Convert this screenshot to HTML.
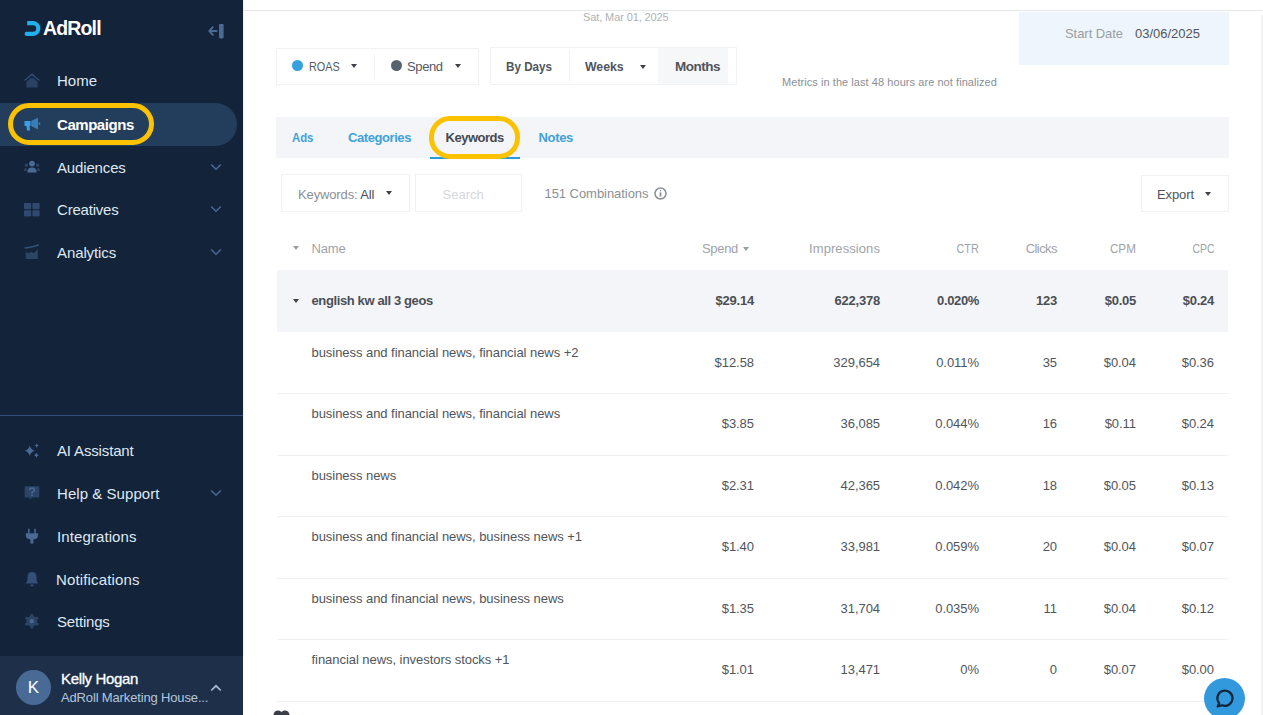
<!DOCTYPE html>
<html><head><meta charset="utf-8">
<style>
*{box-sizing:border-box;margin:0;padding:0}
html,body{width:1263px;height:715px;overflow:hidden;background:#fff;font-family:"Liberation Sans",sans-serif;position:relative}
.abs{position:absolute}
#side{position:absolute;left:0;top:0;width:243px;height:715px;background:#132339}
.nav{position:absolute;left:57px;color:#dfe8f3;font-size:15px;line-height:18px;white-space:nowrap}
.ico{position:absolute;left:24px}
.chev{position:absolute;left:210px;width:12px;height:8px}
#main{position:absolute;left:243px;top:0;width:1020px;height:715px;background:#fff}
.t{position:absolute;white-space:nowrap;line-height:1}
.tri{position:absolute;width:0;height:0;border-left:3.5px solid transparent;border-right:3.5px solid transparent;border-top:4px solid #3c4147}
.tab{font-size:13px;font-weight:bold;color:#40a2d8}
.th{top:242.2px;font-size:13px;color:#9fa3a8}
.gb{font-size:13px;font-weight:bold;color:#4a4f55;letter-spacing:-0.25px}
.td{font-size:13px;color:#50555b;letter-spacing:-0.05px}
</style></head><body>
<div id="side">
  <!-- logo -->
  <svg class="abs" style="left:24px;top:21px" width="17" height="15" viewBox="0 0 17 15">
    <path d="M3.2 2.2 H9 A5.3 5.3 0 0 1 9 12.8 H2.6" fill="none" stroke="#21b0ee" stroke-width="4.2"/><circle cx="2.7" cy="12.8" r="2.1" fill="#21b0ee"/>
  </svg>
  <div class="t" style="left:43px;top:19px;color:#fff;font-size:19.5px;font-weight:bold;letter-spacing:-0.85px">AdRoll</div>
  <!-- collapse -->
  <svg class="abs" style="left:207px;top:23px" width="18" height="16" viewBox="0 0 18 16">
    <path d="M5.8 4.2 L2.3 8 L5.8 11.8 M2.6 8 H9.6" fill="none" stroke="#4a6a96" stroke-width="1.9" stroke-linecap="round" stroke-linejoin="round"/>
    <rect x="12" y="1" width="4.6" height="14.4" rx="0.8" fill="#4a6a96"/>
  </svg>

  <div class="abs" style="left:0;top:103px;width:237px;height:43px;background:#233d5c;border-radius:0 22px 22px 0"></div>

  <!-- home icon -->
  <svg class="ico" style="top:73px" width="17" height="16" viewBox="0 0 17 16">
    <path d="M0.6 7.4 L8 1.2 L15.4 7.4" fill="none" stroke="#31507a" stroke-width="1.3"/>
    <path d="M2.4 8.6 L8 4.2 L13.6 8.6 V14.4 H2.4 Z" fill="#2a4262"/>
  </svg>
  <!-- megaphone -->
  <svg class="ico" style="top:117px" width="17" height="15" viewBox="0 0 17 15">
    <path d="M0.5 4 H6.5 V9 H0.5 Z" fill="#3a9fe6"/>
    <path d="M2.5 9 H5.5 L6 13.5 H3 Z" fill="#3a9fe6"/>
    <path d="M7.2 4 L14 0.8 V12.6 L7.2 9 Z" fill="#3a7db5"/>
    <rect x="14.5" y="5.4" width="1.8" height="2.4" fill="#3a7db5"/>
  </svg>
  <!-- audiences -->
  <svg class="ico" style="top:159px" width="17" height="15" viewBox="0 0 17 15">
    <circle cx="8" cy="4.6" r="2.9" fill="#4a6a96"/>
    <path d="M3.4 13.5 C3.4 9.4 5.2 8.4 8 8.4 C10.8 8.4 12.6 9.4 12.6 13.5 Z" fill="#4a6a96"/>
    <circle cx="2.4" cy="6.2" r="1.6" fill="#2c4565"/>
    <circle cx="13.6" cy="6.2" r="1.6" fill="#2c4565"/>
    <path d="M0 12 C0 9.6 1 9 2.6 9 L2.8 12 Z M16 12 C16 9.6 15 9 13.4 9 L13.2 12 Z" fill="#2c4565"/>
  </svg>
  <!-- creatives -->
  <svg class="ico" style="top:203px" width="16" height="14" viewBox="0 0 16 14">
    <rect x="0" y="0" width="7.2" height="6.3" rx="0.8" fill="#30496e"/>
    <rect x="8.4" y="0" width="7.2" height="6.3" rx="0.8" fill="#30496e"/>
    <rect x="0" y="7.3" width="7.2" height="6.3" rx="0.8" fill="#30496e"/>
    <rect x="8.4" y="7.3" width="7.2" height="6.3" rx="0.8" fill="#30496e"/>
  </svg>
  <!-- analytics -->
  <svg class="ico" style="top:244px" width="16" height="16" viewBox="0 0 16 16">
    <path d="M0.5 4 C5 3.6 10 3 14.8 0.8" fill="none" stroke="#34507a" stroke-width="1.5"/>
    <path d="M1.8 15 V7.5 L4.5 9.5 L7 7.8 L9.8 9.2 L13.8 5.2 V15 Z" fill="#2c4565"/>
  </svg>
  <!-- chevrons -->
  <svg class="chev" style="top:163px" viewBox="0 0 12 8"><path d="M1.2 1.5 L6 6.2 L10.8 1.5" fill="none" stroke="#4a6a96" stroke-width="1.5"/></svg>
  <svg class="chev" style="top:205px" viewBox="0 0 12 8"><path d="M1.2 1.5 L6 6.2 L10.8 1.5" fill="none" stroke="#4a6a96" stroke-width="1.5"/></svg>
  <svg class="chev" style="top:248px" viewBox="0 0 12 8"><path d="M1.2 1.5 L6 6.2 L10.8 1.5" fill="none" stroke="#4a6a96" stroke-width="1.5"/></svg>

  <div class="nav" style="top:71.8px">Home</div>
  <div class="nav" style="top:115.5px;font-weight:bold;color:#fff;letter-spacing:-0.45px">Campaigns</div>
  <div class="nav" style="top:158.5px;letter-spacing:-0.15px">Audiences</div>
  <div class="nav" style="top:200.5px;letter-spacing:-0.2px">Creatives</div>
  <div class="nav" style="top:243.5px;letter-spacing:-0.1px">Analytics</div>

  <div class="abs" style="left:0;top:415px;width:243px;height:1px;background:#34507a"></div>

  <!-- AI sparkle -->
  <svg class="ico" style="top:442px" width="16" height="16" viewBox="0 0 16 16">
    <path d="M5.8 3.5 Q6.6 7.4 10.8 8.7 Q6.6 10 5.8 14 Q5 10 0.8 8.7 Q5 7.4 5.8 3.5 Z" fill="#4a6a96"/>
    <path d="M12.7 1.2 Q13 2.9 14.8 3.5 Q13 4.1 12.7 5.8 Q12.4 4.1 10.6 3.5 Q12.4 2.9 12.7 1.2 Z" fill="#4a6a96"/>
    <path d="M12.4 10.4 Q12.8 12.5 14.8 13.2 Q12.8 13.9 12.4 16 Q12 13.9 10 13.2 Q12 12.5 12.4 10.4 Z" fill="#4a6a96"/>
  </svg>
  <!-- help -->
  <svg class="ico" style="top:485px" width="16" height="16" viewBox="0 0 16 16">
    <path d="M1.3 1.2 H14.7 Q15.3 1.2 15.3 1.8 V12 Q15.3 12.6 14.7 12.6 H8 L5.8 15.2 L5.6 12.6 H1.3 Q0.7 12.6 0.7 12 V1.8 Q0.7 1.2 1.3 1.2 Z" fill="#2c4565"/>
    <path d="M5.6 5 Q5.8 2.9 8 2.9 Q10.3 2.9 10.3 4.9 Q10.3 6.2 8.8 6.9 Q8 7.3 8 8.4" fill="none" stroke="#4a6a96" stroke-width="1.5"/>
    <rect x="7.2" y="9.5" width="1.6" height="1.6" fill="#4a6a96"/>
  </svg>
  <!-- plug -->
  <svg class="ico" style="top:528px" width="16" height="17" viewBox="0 0 16 17">
    <rect x="4" y="0.8" width="1.6" height="4.5" fill="#4a6a96"/>
    <rect x="10.2" y="0.8" width="1.6" height="4.5" fill="#4a6a96"/>
    <path d="M1.8 5.2 H14 V7.6 Q14 11 9.4 11.6 V15.6 H6.4 V11.6 Q1.8 11 1.8 7.6 Z" fill="#4a6a96"/>
  </svg>
  <!-- bell -->
  <svg class="ico" style="top:571px" width="16" height="16" viewBox="0 0 16 16">
    <path d="M8 0.8 Q12.4 1 12.6 6.5 V9.8 L14.3 12.6 H1.7 L3.4 9.8 V6.5 Q3.6 1 8 0.8 Z" fill="#34507a"/>
    <rect x="6.3" y="13.6" width="3.4" height="1.6" rx="0.8" fill="#34507a"/>
  </svg>
  <!-- gear -->
  <svg class="ico" style="top:613px" width="16" height="16" viewBox="0 0 16 16">
    <g fill="#2c4565">
      <circle cx="7.8" cy="8.2" r="5.4"/>
      <rect x="6.4" y="0.9" width="2.8" height="14.6" rx="0.6"/>
      <rect x="6.4" y="0.9" width="2.8" height="14.6" rx="0.6" transform="rotate(60 7.8 8.2)"/>
      <rect x="6.4" y="0.9" width="2.8" height="14.6" rx="0.6" transform="rotate(120 7.8 8.2)"/>
    </g>
    <circle cx="7.8" cy="8.2" r="2.1" fill="#4a6a96"/>
  </svg>
  <svg class="chev" style="top:488.5px" viewBox="0 0 12 8"><path d="M1.2 1.5 L6 6.2 L10.8 1.5" fill="none" stroke="#4a6a96" stroke-width="1.5"/></svg>

  <div class="nav" style="top:441.5px;letter-spacing:-0.15px">AI Assistant</div>
  <div class="nav" style="top:484.5px;letter-spacing:0.05px">Help &amp; Support</div>
  <div class="nav" style="top:527.5px;letter-spacing:0.1px">Integrations</div>
  <div class="nav" style="top:570.5px;left:56px;letter-spacing:0.15px">Notifications</div>
  <div class="nav" style="top:612.5px;letter-spacing:-0.2px">Settings</div>

  <div class="abs" style="left:0;top:656px;width:243px;height:59px;background:#1e3049"></div>
  <div class="abs" style="left:16px;top:670px;width:35px;height:35px;border-radius:50%;background:#4a6a96;color:#fff;font-size:17px;line-height:35px;text-align:center">K</div>
  <div class="t" style="left:61px;top:671px;color:#fff;font-size:15px;letter-spacing:-0.35px;-webkit-text-stroke:0.3px #fff">Kelly Hogan</div>
  <div class="t" style="left:61px;top:690.7px;color:#b4c6de;font-size:13px;letter-spacing:-0.15px">AdRoll Marketing House...</div>
  <svg class="chev" style="top:684px" viewBox="0 0 12 8"><path d="M1.2 6.5 L6 1.8 L10.8 6.5" fill="none" stroke="#a8bcd8" stroke-width="1.7"/></svg>
  <!-- yellow highlight -->
  <div class="abs" style="left:7.5px;top:103px;width:146px;height:41.5px;border:5px solid #fcc200;border-radius:21px"></div>
</div>


<div id="main"></div>
<!-- top line -->
<div class="abs" style="left:243px;top:0;width:1px;height:656px;background:#e9eff6"></div>
<div class="abs" style="left:243px;top:10px;width:1020px;height:1px;background:#e4e6e8"></div>
<div class="abs" style="left:1261px;top:15px;width:2px;height:700px;background:#f0f1f3"></div>
<div class="t" style="letter-spacing:-0.11px;left:583px;top:11.6px;font-size:11px;color:#aeb2b6">Sat, Mar 01, 2025</div>

<!-- ROAS/Spend group -->
<div class="abs" style="left:276px;top:48px;width:203px;height:37px;border:1px solid #f0f1f3;background:#fff"></div>
<div class="abs" style="left:374px;top:54px;width:1px;height:25px;background:#f0f1f3"></div>
<div class="abs" style="left:292px;top:60px;width:11px;height:11px;border-radius:50%;background:#35a0dd"></div>
<div class="t" style="transform:scaleX(0.836);transform-origin:left;left:309px;top:60px;font-size:13px;color:#555a60">ROAS</div>
<div class="tri" style="left:351px;top:64px"></div>
<div class="abs" style="left:391px;top:60px;width:11px;height:11px;border-radius:50%;background:#56636d"></div>
<div class="t" style="letter-spacing:-0.38px;left:407px;top:60px;font-size:13px;color:#555a60">Spend</div>
<div class="tri" style="left:455px;top:64px"></div>

<!-- By days group -->
<div class="abs" style="left:490px;top:47px;width:247px;height:38px;border:1px solid #f1f2f4;background:#fff"></div>
<div class="abs" style="left:658px;top:48px;width:70px;height:36px;background:#f6f7f9"></div>
<div class="abs" style="left:569px;top:50px;width:1px;height:32px;background:#f0f1f3"></div>
<div class="t" style="transform:scaleX(0.863);transform-origin:left;left:506px;top:59.5px;font-size:13.5px;font-weight:bold;color:#50555b">By Days</div>
<div class="t" style="transform:scaleX(0.910);transform-origin:left;left:585px;top:59.5px;font-size:13.5px;font-weight:bold;color:#50555b">Weeks</div>
<div class="tri" style="left:640px;top:65px"></div>
<div class="t" style="letter-spacing:-0.50px;left:675px;top:59.5px;font-size:13.5px;font-weight:bold;color:#50555b">Months</div>

<div class="t" style="letter-spacing:0.06px;left:782px;top:76.6px;font-size:11px;color:#8a8f95">Metrics in the last 48 hours are not finalized</div>

<!-- start date -->
<div class="abs" style="left:1019px;top:12px;width:210px;height:53px;background:#eef5fc"></div>
<div class="t" style="letter-spacing:-0.05px;left:1065px;top:27.2px;font-size:13px;color:#9a9ea3">Start Date</div>
<div class="t" style="letter-spacing:-0.01px;left:1135px;top:27.2px;font-size:13px;color:#50555b">03/06/2025</div>

<!-- tabs -->
<div class="abs" style="left:276px;top:117px;width:953px;height:41px;background:#f4f5f8"></div>
<div class="t tab" style="transform:scaleX(0.871);transform-origin:left;left:292px;top:131px">Ads</div>
<div class="t tab" style="letter-spacing:-0.42px;left:348px;top:131px">Categories</div>
<div class="t tab" style="letter-spacing:-0.48px;left:445.5px;top:131px;color:#454a50">Keywords</div>
<div class="t tab" style="letter-spacing:-0.33px;left:538.5px;top:131px">Notes</div>
<div class="abs" style="left:430px;top:157px;width:90px;height:2px;background:#2b9ad8"></div>
<div class="abs" style="left:429px;top:116px;width:90.5px;height:42.5px;border:5px solid #fcc200;border-radius:21px"></div>

<!-- filter row -->
<div class="abs" style="left:281px;top:174px;width:129px;height:38px;border:1px solid #f0f1f3;background:#fff"></div>
<div class="t" style="letter-spacing:-0.13px;left:298px;top:187.5px;font-size:13px;color:#8a8f95">Keywords: <span style="color:#4a4f55">All</span></div>
<div class="tri" style="left:386px;top:191px"></div>
<div class="abs" style="left:415px;top:174px;width:107px;height:38px;border:1px solid #f0f1f3;background:#fff"></div>
<div class="t" style="left:442.5px;top:187.5px;font-size:13px;color:#d5d7da">Search</div>
<div class="t" style="letter-spacing:-0.05px;left:544.5px;top:187px;font-size:13px;color:#8a8f95">151 Combinations</div>
<svg class="abs" style="left:654px;top:187px" width="13" height="13" viewBox="0 0 13 13"><circle cx="6.5" cy="6.5" r="5.5" fill="none" stroke="#8a8f95" stroke-width="1.5"/><rect x="5.6" y="5.4" width="1.8" height="4.2" fill="#8a8f95"/><circle cx="6.5" cy="3.8" r="0.8" fill="#8a8f95"/></svg>
<div class="abs" style="left:1141px;top:175px;width:88px;height:37px;border:1px solid #f0f1f3;background:#fff"></div>
<div class="t" style="letter-spacing:-0.10px;left:1157px;top:188px;font-size:13px;color:#50555b">Export</div>
<div class="tri" style="left:1205px;top:192px"></div>

<!-- table header -->
<div class="tri" style="left:293px;top:246px;border-top-color:#9a9ea3"></div>
<div class="t th" style="letter-spacing:-0.17px;left:311.5px">Name</div>
<div class="t th" style="letter-spacing:-0.32px;right:525px">Spend</div>
<div class="tri" style="left:743px;top:246.5px;border-top-color:#9a9ea3"></div>
<div class="t th" style="letter-spacing:0.08px;right:383px">Impressions</div>
<div class="t th" style="transform:scaleX(0.835);transform-origin:right;right:284px">CTR</div>
<div class="t th" style="letter-spacing:-0.55px;right:206px">Clicks</div>
<div class="t th" style="transform:scaleX(0.900);transform-origin:right;right:127px">CPM</div>
<div class="t th" style="transform:scaleX(0.801);transform-origin:right;right:49px">CPC</div>
<div class="abs" style="left:277px;top:269.5px;width:951px;height:62.5px;background:#f4f5f8"></div>
<div class="tri" style="left:293px;top:299px;border-top-color:#3c4147"></div>
<div class="t gb" style="letter-spacing:-0.38px;left:311.5px;top:293.7px">english kw all 3 geos</div>
<div class="t gb" style="letter-spacing:-0.21px;right:509px;top:293.7px">$29.14</div>
<div class="t gb" style="letter-spacing:-0.20px;right:383px;top:293.7px">622,378</div>
<div class="t gb" style="letter-spacing:-0.35px;right:284px;top:293.7px">0.020%</div>
<div class="t gb" style="right:206px;top:293.7px">123</div>
<div class="t gb" style="right:127px;top:293.7px">$0.05</div>
<div class="t gb" style="right:49px;top:293.7px">$0.24</div>
<div class="abs" style="left:277px;top:393px;width:951px;height:1px;background:#eff0f2"></div>
<div class="t td" style="left:311.5px;top:345.8px">business and financial news, financial news +2</div>
<div class="t td" style="right:509px;top:355.8px">$12.58</div>
<div class="t td" style="right:383px;top:355.8px">329,654</div>
<div class="t td" style="right:284px;top:355.8px">0.011%</div>
<div class="t td" style="right:206px;top:355.8px">35</div>
<div class="t td" style="right:127px;top:355.8px">$0.04</div>
<div class="t td" style="right:49px;top:355.8px">$0.36</div>
<div class="abs" style="left:277px;top:455px;width:951px;height:1px;background:#eff0f2"></div>
<div class="t td" style="left:311.5px;top:406.8px">business and financial news, financial news</div>
<div class="t td" style="right:509px;top:416.8px">$3.85</div>
<div class="t td" style="right:383px;top:416.8px">36,085</div>
<div class="t td" style="right:284px;top:416.8px">0.044%</div>
<div class="t td" style="right:206px;top:416.8px">16</div>
<div class="t td" style="right:127px;top:416.8px">$0.11</div>
<div class="t td" style="right:49px;top:416.8px">$0.24</div>
<div class="abs" style="left:277px;top:516px;width:951px;height:1px;background:#eff0f2"></div>
<div class="t td" style="left:311.5px;top:468.8px">business news</div>
<div class="t td" style="right:509px;top:478.8px">$2.31</div>
<div class="t td" style="right:383px;top:478.8px">42,365</div>
<div class="t td" style="right:284px;top:478.8px">0.042%</div>
<div class="t td" style="right:206px;top:478.8px">18</div>
<div class="t td" style="right:127px;top:478.8px">$0.05</div>
<div class="t td" style="right:49px;top:478.8px">$0.13</div>
<div class="abs" style="left:277px;top:578px;width:951px;height:1px;background:#eff0f2"></div>
<div class="t td" style="left:311.5px;top:529.8px">business and financial news, business news +1</div>
<div class="t td" style="right:509px;top:539.8px">$1.40</div>
<div class="t td" style="right:383px;top:539.8px">33,981</div>
<div class="t td" style="right:284px;top:539.8px">0.059%</div>
<div class="t td" style="right:206px;top:539.8px">20</div>
<div class="t td" style="right:127px;top:539.8px">$0.04</div>
<div class="t td" style="right:49px;top:539.8px">$0.07</div>
<div class="abs" style="left:277px;top:639px;width:951px;height:1px;background:#eff0f2"></div>
<div class="t td" style="left:311.5px;top:591.8px">business and financial news, business news</div>
<div class="t td" style="right:509px;top:601.8px">$1.35</div>
<div class="t td" style="right:383px;top:601.8px">31,704</div>
<div class="t td" style="right:284px;top:601.8px">0.035%</div>
<div class="t td" style="right:206px;top:601.8px">11</div>
<div class="t td" style="right:127px;top:601.8px">$0.04</div>
<div class="t td" style="right:49px;top:601.8px">$0.12</div>
<div class="abs" style="left:277px;top:701px;width:951px;height:1px;background:#eff0f2"></div>
<div class="t td" style="left:311.5px;top:652.8px">financial news, investors stocks +1</div>
<div class="t td" style="right:509px;top:662.8px">$1.01</div>
<div class="t td" style="right:383px;top:662.8px">13,471</div>
<div class="t td" style="right:284px;top:662.8px">0%</div>
<div class="t td" style="right:206px;top:662.8px">0</div>
<div class="t td" style="right:127px;top:662.8px">$0.07</div>
<div class="t td" style="right:49px;top:662.8px">$0.00</div>
<!-- chat bubble -->
<div class="abs" style="left:1203.5px;top:677.5px;width:41px;height:41px;border-radius:50%;background:#3399dd"></div>
<svg class="abs" style="left:1213px;top:687px" width="22" height="22" viewBox="0 0 22 22"><path d="M6.2 16.2 A7.6 7.6 0 1 1 9.2 18.3 L4.6 19.4 Z" fill="none" stroke="#10243a" stroke-width="2.2" stroke-linejoin="round"/></svg>
<!-- heart -->
<svg class="abs" style="left:273px;top:710px" width="18" height="6" viewBox="0 0 18 6"><circle cx="5" cy="5" r="4.5" fill="#3a3f45"/><circle cx="12" cy="5" r="4.5" fill="#3a3f45"/></svg>

</body></html>
